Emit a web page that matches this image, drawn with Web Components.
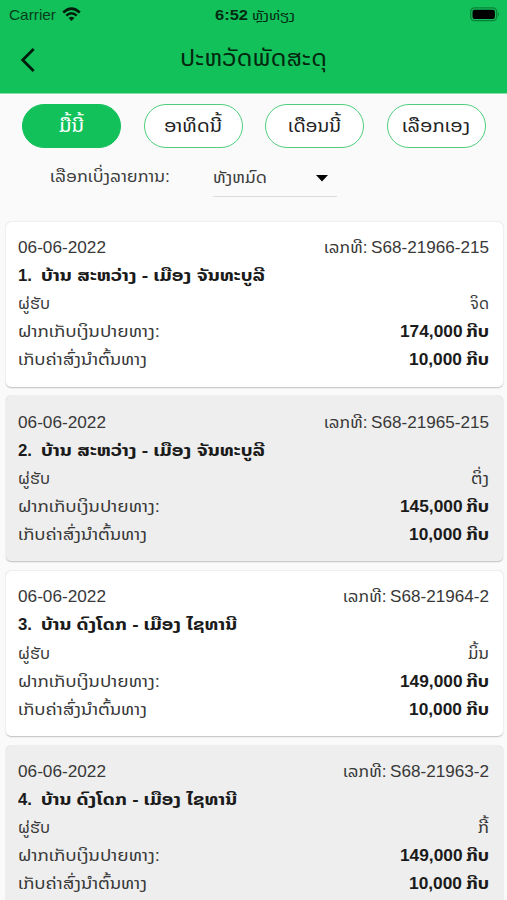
<!DOCTYPE html>
<html lang="lo">
<head>
<meta charset="utf-8">
<title>ປະຫວັດພັດສະດຸ</title>
<style>
html,body{margin:0;height:100%}
body{background:#fafafa;overflow:hidden;font-family:"Liberation Sans","Noto Sans Lao","DejaVu Sans",sans-serif;color:#383838}
</style>
</head>
<body>
<history-screen></history-screen>
<script>
const define = (name, html, init) => customElements.define(name, class extends HTMLElement {
  constructor() {
    super();
    this.attachShadow({mode: 'open'}).innerHTML = html;
  }
  connectedCallback() { if (init) init(this, this.shadowRoot); }
});

define('text-line', `<style>
:host{display:block;white-space:pre;line-height:28px;height:28px;flex:none}
span{display:inline-block;transform-origin:0 50%}
</style><span><slot></slot></span>`, (el, root) => {
  const w = +el.getAttribute('w');
  const s = root.querySelector('span');
  if (w) {
    const natural = s.getBoundingClientRect().width;
    el.style.width = w + 'px';
    s.style.transform = `scaleX(${w / natural})`;
  }
});

define('status-bar', `<style>
:host{display:grid;grid-template-columns:1fr auto 1fr;align-items:center;height:28px;padding:0 7px 0 9px;color:#063d1a;font-size:14.5px}
.l{display:flex;align-items:center;gap:6px}
.c{display:flex;align-items:center;gap:4px;color:#042c12}
.lao{font-size:12px;padding-top:2px}
.r{display:flex;justify-content:flex-end}
svg{display:block}
.l svg,.r svg{margin-top:-2px}
</style>
<div class="l"><text-line w="47">Carrier</text-line>
<svg width="19" height="15" viewBox="0 0 19 15" fill="none" stroke="#021c0b" stroke-width="2.5"><path d="M1.2 5.5Q9.5-2.3 17.8 5.5M4.3 8.7Q9.5 3.9 14.7 8.7"/><path d="M6.6 10.9Q9.5 8.5 12.4 10.9L9.5 14Z" fill="#021c0b" stroke="none"/></svg></div>
<div class="c"><b><text-line w="33" style="font-size:15px">6:52</text-line></b><text-line class="lao" w="43">ຫຼັງທ່ຽງ</text-line></div>
<div class="r"><svg width="30" height="15" viewBox="0 0 30 15"><rect x=".7" y=".9" width="26" height="12.8" rx="4" fill="none" stroke="#0b8138" stroke-width="1.3"/><rect x="2.5" y="2.7" width="22.4" height="9.2" rx="2" fill="#000"/><path d="M28 5.2q2 2 0 4.2z" fill="#0b8138"/></svg></div>`);

define('nav-bar', `<style>
:host{display:grid;grid-template-columns:60px 1fr 60px;align-items:center;height:62px;color:#03270f}
svg{display:block;margin:1px 0 0 20px}
.t{display:flex;justify-content:center;font-size:22.5px}
</style>
<svg width="16" height="26" viewBox="0 0 16 26" fill="none" stroke="#021c0b" stroke-width="2.8"><path d="M13.7 2 2.7 13l11 11"/></svg>
<div class="t"><text-line w="147">ປະຫວັດພັດສະດຸ</text-line></div>`);

define('range-pill', `<style>
:host{display:flex;box-sizing:border-box;width:99px;height:44px;border:1.5px solid #4fce7e;border-radius:22px;background:#fff;align-items:center;justify-content:center;font-size:18px;color:#222}
:host([active]){background:#13c15b;border-color:#13c15b;color:#fff}
</style><slot></slot>`);

define('range-filter', `<style>
:host{display:flex;justify-content:space-between;padding:9.5px 21px 0 22px}
text-line{padding-top:1px}
</style>
<range-pill active><text-line w="25">ມື້ນີ້</text-line></range-pill>
<range-pill><text-line w="58">ອາທິດນີ້</text-line></range-pill>
<range-pill><text-line w="53">ເດືອນນີ້</text-line></range-pill>
<range-pill><text-line w="68">ເລືອກເອງ</text-line></range-pill>`);

define('list-select', `<style>
:host{display:flex;padding:10px 0 0 50px;height:39px;font-size:16px;color:#3c3c3c;align-items:flex-start}
.s{box-sizing:border-box;width:124px;height:39px;margin-left:43px;border-bottom:1px solid #dcdcdc;display:flex;justify-content:space-between;padding-right:9px}
text-line{margin-top:5px}
.s text-line{margin-top:6px;font-size:15px}
svg{display:block;margin-top:17px}
</style>
<text-line w="120">ເລືອກເບິ່ງລາຍການ:</text-line>
<div class="s"><text-line w="54">ທັງຫມົດ</text-line><svg width="12" height="7"><path d="M0 0h12L6 6.5z" fill="#000"/></svg></div>`);

define('parcel-card', `<style>
:host{display:block;box-sizing:border-box;height:165px;margin:0 4.5px 0 5.5px;padding:12.5px 13.5px 0 12.5px;background:#fff;border-radius:5px;box-shadow:0 .5px 1.5px rgba(0,0,0,.24);font-size:17px}
:host([shaded]){background:#eee}
.row{display:flex;justify-content:space-between;height:28.1px}
.v{display:flex}
.b{font-weight:700;color:#1b1b1b;gap:4px}
.lo{font-size:16px}
</style>
<div class="row"><text-line w="88">06-06-2022</text-line><div class="v" style="gap:4px"><text-line class="lo" w="43.5">ເລກທີ:</text-line><text-line id="code"></text-line></div></div>
<div class="row"><div class="v b" style="gap:9px"><text-line id="no" w="14"></text-line><text-line id="route" class="lo"></text-line></div></div>
<div class="row"><text-line class="lo" w="32">ຜູ່ຮັບ</text-line><text-line class="lo" id="who"></text-line></div>
<div class="row"><text-line class="lo" w="142">ຝາກເກັບເງິນປາຍທາງ:</text-line><div class="v b"><text-line id="amount" w="62"></text-line><text-line class="lo" w="23">ກີບ</text-line></div></div>
<div class="row"><text-line class="lo" w="129">ເກັບຄ່າສົ່ງນຳຕົ້ນທາງ</text-line><div class="v b"><text-line w="53">10,000</text-line><text-line class="lo" w="23">ກີບ</text-line></div></div>`,
(el, root) => {
  for (const [id, text, w] of el.fields) {
    const t = root.getElementById(id);
    const n = document.createElement('text-line');
    n.textContent = text;
    n.id = id;
    n.className = t.className;
    n.setAttribute('w', w);
    t.replaceWith(n);
  }
});

define('parcel-list', `<style>
:host{display:flex;flex-direction:column;gap:9.7px;padding-top:25px}
</style>`, (el, root) => {
  const far = 'ບ້ານ ສະຫວ່າງ - ເມືອງ ຈັນທະບູລີ', near = 'ບ້ານ ດົງໂດກ - ເມືອງ ໄຊທານີ';
  [
    ['S68-21966-215', 118, far, 224, 'ຈິດ', 19, '174,000'],
    ['S68-21965-215', 118, far, 224, 'ຕິ່ງ', 18, '145,000'],
    ['S68-21964-2', 99, near, 196, 'ມິ້ນ', 21, '149,000'],
    ['S68-21963-2', 99, near, 196, 'ກີ້', 11, '149,000'],
  ].forEach(([code, cw, route, rw, who, ww, amount], i) => {
    const c = document.createElement('parcel-card');
    c.fields = [['code', code, cw], ['no', i + 1 + '.', 14], ['route', route, rw], ['who', who, ww], ['amount', amount, 62.5]];
    c.toggleAttribute('shaded', i % 2 === 1);
    root.append(c);
  });
});

define('history-screen', `<style>
:host{display:block;width:507px;height:900px;overflow:hidden;background:#fafafa}
header{background:#13c15b;height:93px;border-bottom:1px solid #8adfa9}
</style>
<header><status-bar></status-bar><nav-bar></nav-bar></header>
<range-filter></range-filter>
<list-select></list-select>
<parcel-list></parcel-list>`);
</script>
</body>
</html>
